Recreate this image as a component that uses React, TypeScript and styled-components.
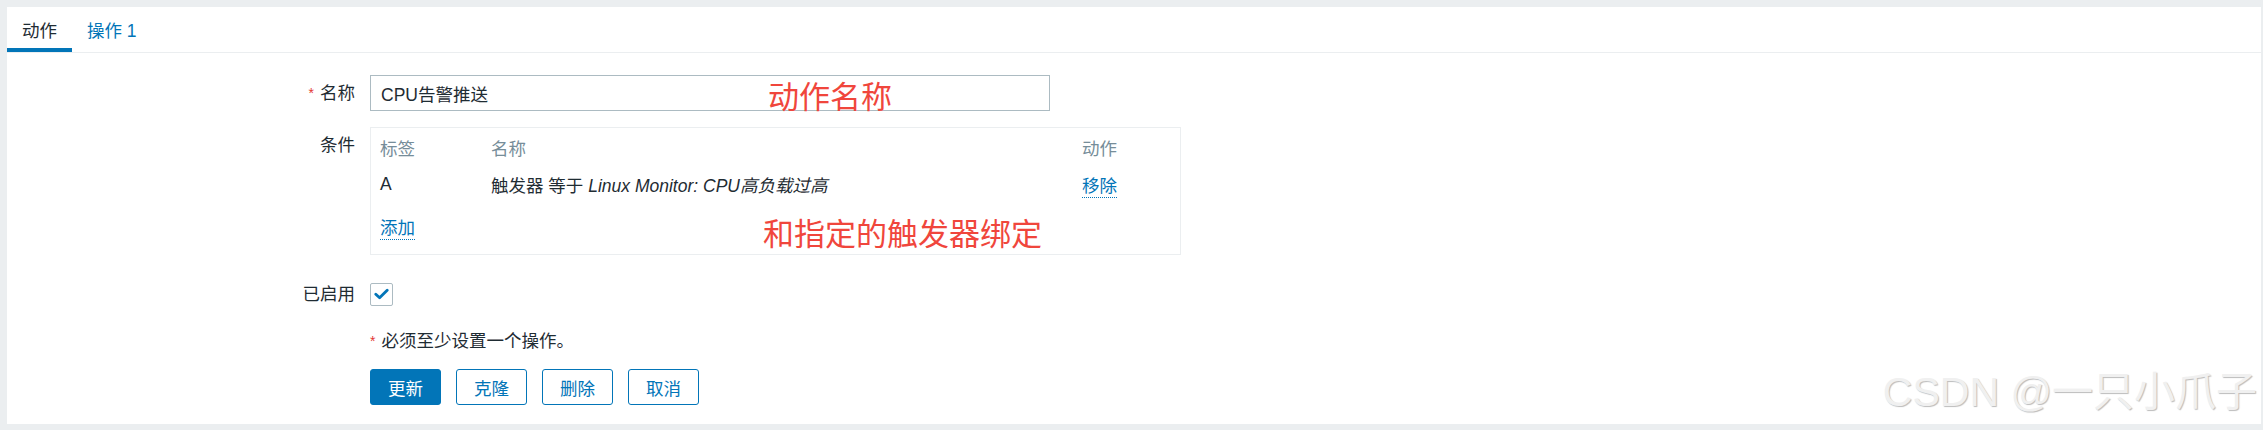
import React from "react";
import styled, { createGlobalStyle } from "styled-components";

const GlobalStyle = createGlobalStyle`
  html, body {
    margin: 0;
    padding: 0;
    background: #ebeef0;
  }
  body {
    font-family: "Liberation Sans", Arial, "Noto Sans CJK SC", sans-serif;
    font-size: 17.5px;
    color: #1f2c33;
  }
  * { box-sizing: border-box; }
`;

const Page = styled.div`
  position: relative;
  width: 2263px;
  height: 430px;
  padding: 7px 2px 6px 7px;
`;

const Panel = styled.div`
  background: #ffffff;
  height: 417px;
`;

const TabBar = styled.div`
  display: flex;
  height: 46px;
  border-bottom: 1px solid #ebeef0;
`;

const Tab = styled.div<{ $active?: boolean }>`
  display: flex;
  align-items: center;
  padding: 0 15px;
  height: 45px;
  color: ${(p) => (p.$active ? "#1f2c33" : "#0275b8")};
  box-shadow: ${(p) => (p.$active ? "inset 0 -4px 0 #0275b8" : "none")};
  cursor: pointer;
`;

const Form = styled.div`
  display: grid;
  grid-template-columns: 348px 1fr;
  column-gap: 15px;
  padding-top: 22px;
`;

const Label = styled.div<{ $mt?: number }>`
  text-align: right;
  line-height: 36px;
  height: 36px;
  margin-top: ${(p) => p.$mt ?? 0}px;
  white-space: nowrap;
`;

const Field = styled.div<{ $mt?: number }>`
  margin-top: ${(p) => p.$mt ?? 0}px;
  display: flex;
  align-items: center;
  min-height: 36px;
`;

const Star = styled.span`
  color: #e33734;
  font-size: 14px;
  vertical-align: top;
  margin-right: 6px;
`;

const TextInput = styled.div`
  width: 680px;
  height: 36px;
  border: 1px solid #acbbc2;
  padding: 0 10px;
  display: flex;
  align-items: center;
  background: #fff;
`;

const CondBox = styled.div`
  width: 811px;
  height: 128px;
  border: 1px solid #ebeef0;
  padding: 6px 0 0 9px;
`;

const CondRow = styled.div<{ $mt?: number }>`
  display: grid;
  grid-template-columns: 111px 591px auto;
  height: 26px;
  align-items: center;
  margin-top: ${(p) => p.$mt ?? 0}px;
`;

const HeadCell = styled.div`
  color: #768d99;
`;

const Italic = styled.span`
  font-style: italic;
`;

const Link = styled.span`
  color: #0275b8;
  border-bottom: 1px dotted #0275b8;
  padding-bottom: 1px;
  cursor: pointer;
`;

const CheckBox = styled.div`
  width: 23px;
  height: 23px;
  border: 1px solid #acbbc2;
  border-radius: 2px;
  display: flex;
  align-items: center;
  justify-content: center;
  background: #fff;
`;

const Note = styled.div<{ $mt?: number }>`
  grid-column: 2;
  margin-top: ${(p) => p.$mt ?? 0}px;
  height: 26px;
  line-height: 26px;
`;

const ButtonRow = styled.div<{ $mt?: number }>`
  grid-column: 2;
  margin-top: ${(p) => p.$mt ?? 0}px;
  display: flex;
  gap: 15px;
`;

const Button = styled.button<{ $primary?: boolean }>`
  width: 71px;
  height: 36px;
  border-radius: 3px;
  font-family: inherit;
  font-size: 17.5px;
  border: 1px solid #0275b8;
  background: ${(p) => (p.$primary ? "#0275b8" : "#ffffff")};
  color: ${(p) => (p.$primary ? "#ffffff" : "#0275b8")};
  padding: 0;
  cursor: pointer;
`;

const Annotation = styled.div<{ $x: number; $y: number }>`
  position: absolute;
  left: ${(p) => p.$x}px;
  top: ${(p) => p.$y}px;
  color: #f0463c;
  font-family: "Noto Sans CJK SC", sans-serif;
  font-size: 31px;
  line-height: 36px;
  white-space: nowrap;
`;

const Watermark = styled.div`
  position: absolute;
  right: 6px;
  top: 364px;
  font-family: "Liberation Sans", "Noto Sans CJK SC", sans-serif;
  font-size: 41px;
  line-height: 56px;
  color: #f0f0f0;
  text-shadow: 1px 1px 1px #bcbcbc, -1px -1px 0 #ffffff;
  white-space: nowrap;
`;

export default function App() {
  return (
    <>
      <GlobalStyle />
      <Page>
        <Panel>
          <TabBar>
            <Tab $active>动作</Tab>
            <Tab>操作 1</Tab>
          </TabBar>
          <Form>
            <Label>
              <Star>*</Star>名称
            </Label>
            <Field>
              <TextInput>CPU告警推送</TextInput>
            </Field>

            <Label $mt={16}>条件</Label>
            <Field $mt={16}>
              <CondBox>
                <CondRow>
                  <HeadCell>标签</HeadCell>
                  <HeadCell>名称</HeadCell>
                  <HeadCell>动作</HeadCell>
                </CondRow>
                <CondRow $mt={11}>
                  <div>A</div>
                  <div>
                    触发器 等于 <Italic>Linux Monitor: CPU高负载过高</Italic>
                  </div>
                  <div>
                    <Link>移除</Link>
                  </div>
                </CondRow>
                <CondRow $mt={16}>
                  <div>
                    <Link>添加</Link>
                  </div>
                </CondRow>
              </CondBox>
            </Field>

            <Label $mt={21}>已启用</Label>
            <Field $mt={21}>
              <CheckBox>
                <svg width="15" height="12" viewBox="0 0 15 12">
                  <path
                    d="M1.8 6.2 L5.6 9.8 L13.2 2.2"
                    fill="none"
                    stroke="#0275b8"
                    strokeWidth="2.8"
                    strokeLinecap="round"
                    strokeLinejoin="round"
                  />
                </svg>
              </CheckBox>
            </Field>

            <Note $mt={16}>
              <Star>*</Star>必须至少设置一个操作。
            </Note>

            <ButtonRow $mt={15}>
              <Button $primary>更新</Button>
              <Button>克隆</Button>
              <Button>删除</Button>
              <Button>取消</Button>
            </ButtonRow>
          </Form>
        </Panel>
        <Annotation $x={768} $y={77}>动作名称</Annotation>
        <Annotation $x={763} $y={214}>和指定的触发器绑定</Annotation>
        <Watermark>CSDN @一只小爪子</Watermark>
      </Page>
    </>
  );
}
